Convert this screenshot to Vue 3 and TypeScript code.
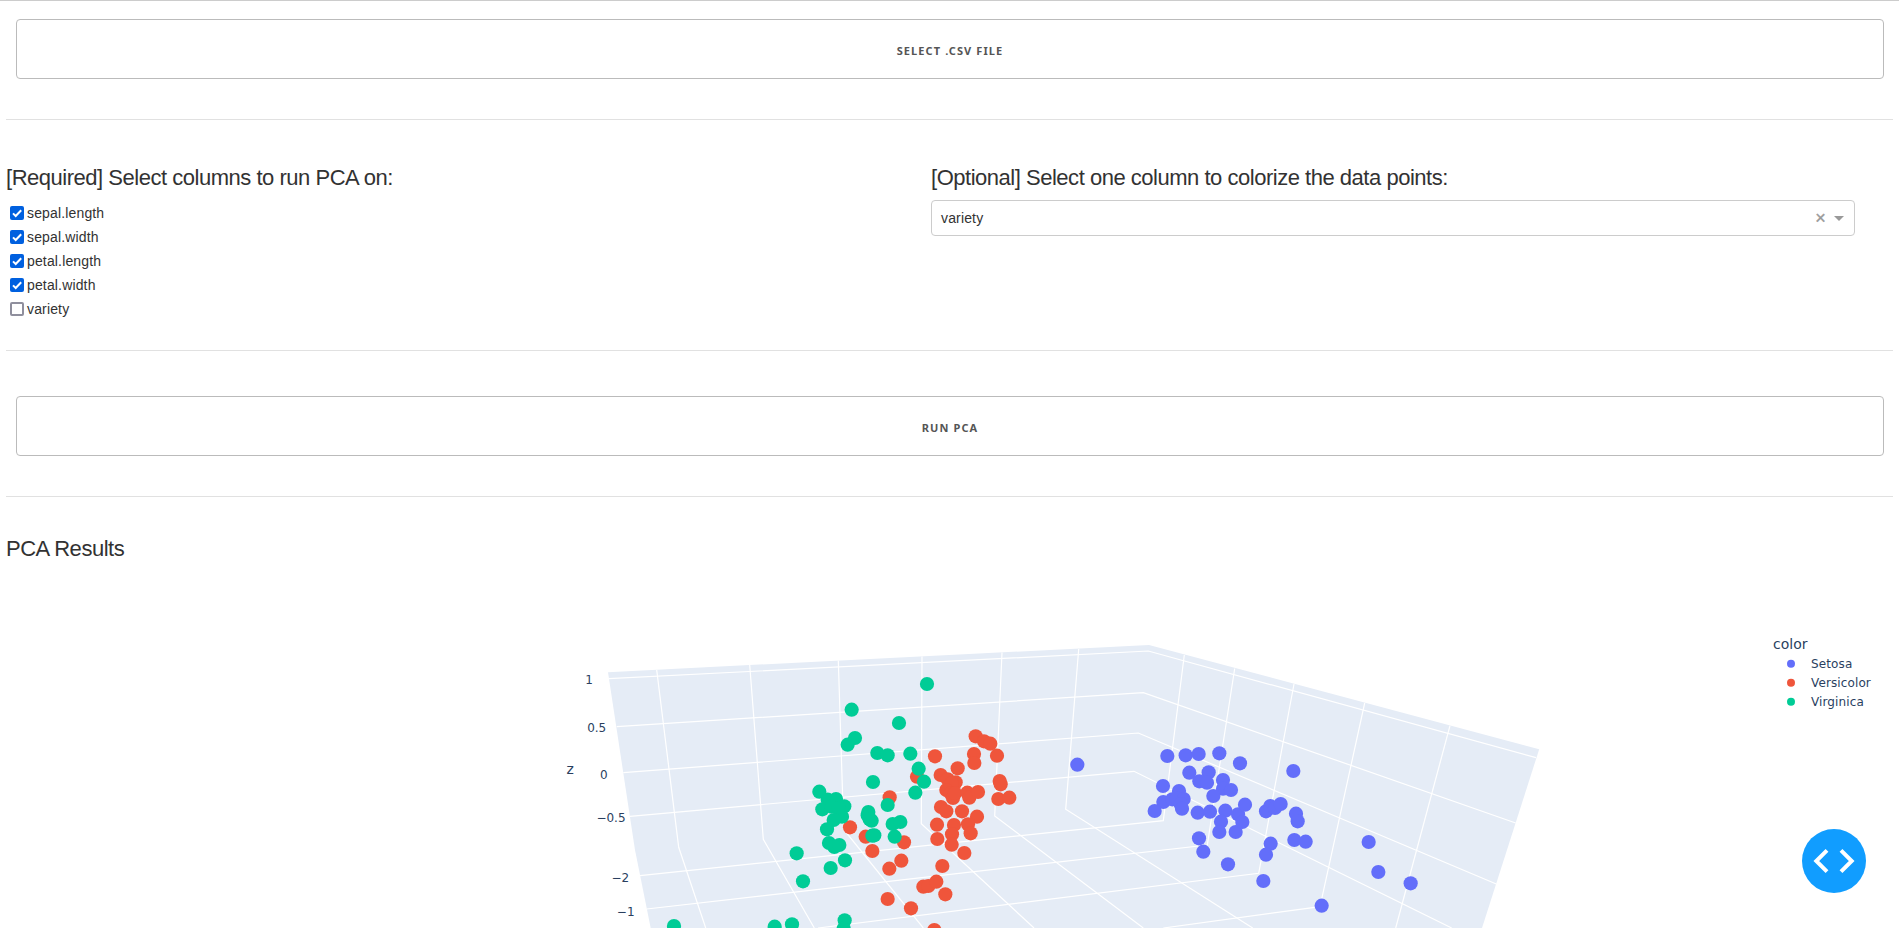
<script setup lang="ts">
import { ref } from 'vue'

type Pair = [number, number]

interface Column {
  name: string
  checked: boolean
}

interface Series {
  name: string
  color: string
  points: Pair[]
}

interface Label {
  text: string
  x: number
  y: number
}

const columns = ref<Column[]>([
  { name: 'sepal.length', checked: true },
  { name: 'sepal.width', checked: true },
  { name: 'petal.length', checked: true },
  { name: 'petal.width', checked: true },
  { name: 'variety', checked: false },
])

// Marker positions are kept in thirds of a pixel from a per-group origin.
const place = (ox: number, oy: number, pts: Pair[]): Pair[] =>
  pts.map(([x, y]) => [ox + x / 3, oy + y / 3])

const series: Series[] = [
  {
    name: 'Setosa',
    color: '#636efa',
    points: [
      ...place(1030, 630, [
        [142, 404], [412, 378], [467, 376], [506, 372], [568, 370], [630, 400], [790, 423],
        [478, 428], [536, 427], [508, 454], [531, 458], [579, 450], [579, 476], [603, 480],
        [550, 498], [399, 468], [447, 483], [400, 516], [374, 543], [427, 508], [440, 505],
        [461, 507], [452, 522], [456, 536], [503, 548], [540, 545], [586, 542], [573, 575],
        [568, 606], [617, 606], [624, 553], [637, 576], [645, 524], [708, 544], [721, 528],
        [735, 534], [752, 522], [798, 551], [803, 574], [793, 630], [507, 625], [520, 665],
        [594, 703], [722, 641], [708, 674], [700, 753],
      ]),
      ...place(1280, 680, [[77, 485], [266, 486], [295, 576], [392, 610], [125, 677]]),
    ],
  },
  {
    name: 'Versicolor',
    color: '#ef553b',
    points: place(780, 660, [
      [587, 229], [612, 244], [631, 251], [582, 282], [583, 309], [651, 287], [465, 289],
      [533, 325], [482, 345], [503, 358], [527, 367], [515, 370], [499, 390], [512, 400],
      [519, 414], [525, 400], [562, 398], [568, 413], [594, 396], [659, 363], [662, 373],
      [655, 417], [688, 413], [483, 441], [499, 454], [546, 454], [591, 470], [471, 494],
      [472, 537], [522, 495], [564, 493], [572, 520], [516, 523], [515, 554], [553, 579],
      [487, 618], [430, 680], [445, 678], [469, 665], [496, 703], [323, 717], [393, 745],
      [328, 626], [364, 602], [277, 573], [210, 502], [257, 530], [372, 547], [411, 350],
      [329, 412], [463, 810],
    ]),
  },
  {
    name: 'Virginica',
    color: '#00cc96',
    points: place(780, 660, [
      [441, 72], [215, 149], [357, 189], [225, 234], [203, 254], [292, 279], [323, 286],
      [391, 281], [416, 326], [432, 365], [406, 398], [279, 366], [118, 395], [323, 435],
      [143, 419], [168, 417], [127, 448], [193, 439], [155, 440], [176, 445], [186, 470],
      [161, 480], [141, 508], [265, 456], [263, 466], [275, 482], [269, 478], [338, 492],
      [361, 486], [344, 530], [277, 527], [283, 526], [147, 549], [163, 561], [178, 555],
      [195, 601], [152, 624], [50, 580], [69, 664], [194, 781], [191, 806], [36, 793],
      [-16, 800], [-318, 798],
    ]),
  },
]

const gridLines: string[] = [
  '608.7,678.7 1148.3,651 1536,757.7',
  '616.7,726.7 1143.3,692.7 1515.7,823',
  '623.3,772.7 1138.3,733 1496.3,884',
  '630,816.3 1134,771.3 1451.7,928',
  '656.7,670 678.7,847.3 705.7,928',
  '749.7,665 763.3,839.3 814.3,928',
  '838.3,660.5 843.7,829.5 923.3,928',
  '922,656.5 921.3,823.7 1034,928',
  '1002,652.5 994.7,816 1143.3,928',
  '1078.7,649 1065.7,809.3 1252.7,928',
  '1184.3,655 1163.3,820.7 640,875.7',
  '1234.7,668.5 1207.3,845 646.7,909',
  '1294,684 1258.7,873.3 818,928',
  '1364.7,703 1320,906.6 1163.3,928',
  '1450,725.7 1395.7,928',
]

const ticks: Label[] = [
  { text: '1', x: 589, y: 684 },
  { text: '0.5', x: 596.7, y: 732.4 },
  { text: '0', x: 603.8, y: 779 },
  { text: '−0.5', x: 611, y: 822.2 },
  { text: '−2', x: 620.3, y: 882.2 },
  { text: '−1', x: 625.7, y: 916.2 },
]
</script>

<template>
  <div class="page">
    <section class="action">
      <button class="btn" type="button">Select .csv file</button>
    </section>
    <hr class="rule" />
    <section class="options">
      <div class="col">
        <h5 class="title">[Required] Select columns to run PCA on:</h5>
        <div class="checks">
          <label v-for="c in columns" :key="c.name" class="check">
            <input v-model="c.checked" class="native" type="checkbox" />
            <span class="box" :class="{ on: c.checked }">
              <svg v-if="c.checked" viewBox="0 0 14 14" width="14" height="14">
                <path d="M3 7.4 L5.7 10 L11.2 4.2" fill="none" stroke="#fff" stroke-width="2" />
              </svg>
            </span>
            <span>{{ c.name }}</span>
          </label>
        </div>
      </div>
      <div class="col">
        <h5 class="title">[Optional] Select one column to colorize the data points:</h5>
        <div class="select">
          <span class="value">variety</span>
          <span class="clear">×</span>
          <span class="arrow"></span>
        </div>
      </div>
    </section>
    <hr class="rule" />
    <section class="action run">
      <button class="btn" type="button">Run PCA</button>
    </section>
    <hr class="rule" />
    <h5 class="title results">PCA Results</h5>
    <svg class="plot" viewBox="0 600 1899 328" width="1899" height="328">
      <polygon points="608,672.2 1149,645 1539.2,749.2 1482,928 650.7,928 635,850" fill="#e5ecf6" />
      <polyline v-for="g in gridLines" :key="g" class="grid" :points="g" />
      <g v-for="s in series" :key="s.name" :fill="s.color">
        <circle v-for="(p, i) in s.points" :key="i" :cx="p[0]" :cy="p[1]" r="7.1" />
      </g>
      <text v-for="t in ticks" :key="t.text" class="tick" :x="t.x" :y="t.y">{{ t.text }}</text>
      <text class="axis" x="570.3" y="774">z</text>
      <text class="legend-title" x="1773" y="649">color</text>
      <g v-for="(s, i) in series" :key="s.name">
        <circle cx="1791" :cy="663.7 + i * 19" r="4" :fill="s.color" />
        <text class="legend" x="1811" :y="668 + i * 19">{{ s.name }}</text>
      </g>
    </svg>
    <button class="debug" type="button" aria-label="Debug menu">
      <svg viewBox="0 0 64 64" width="64" height="64">
        <path d="M25 21.3 L14.3 32 L25 42.7 M39 21.3 L49.7 32 L39 42.7" fill="none" stroke="#fff" stroke-width="4" />
      </svg>
    </button>
  </div>
</template>

<style>
body {
  margin: 0;
  background: #fff;
  overflow: hidden;
}
</style>

<style scoped>
.page {
  position: relative;
  box-sizing: border-box;
  width: 100%;
  height: 928px;
  overflow: hidden;
  border-top: 1px solid #ccc;
  font-family: "Liberation Sans", Arial, sans-serif;
  font-size: 15px;
  color: #323232;
}

.action {
  padding: 18px 15px 0 16px;
}

.run {
  padding-top: 45px;
}

.btn {
  display: block;
  box-sizing: border-box;
  width: 100%;
  height: 60px;
  padding: 2px 0 0;
  border: 1px solid #bbb;
  border-radius: 4px;
  background: transparent;
  color: #555;
  font-family: "Noto Sans", "DejaVu Sans", sans-serif;
  font-size: 11px;
  font-weight: 700;
  letter-spacing: 1.1px;
  text-transform: uppercase;
}

.rule {
  height: 1px;
  margin: 40px 6px 0;
  border: 0;
  background: #e1e1e1;
}

.title {
  margin: 0;
  font-size: 22px;
  font-weight: 400;
  line-height: 32px;
  letter-spacing: -0.48px;
  white-space: nowrap;
}

.options {
  display: flex;
  box-sizing: border-box;
  height: 230px;
  padding: 42px 43px 0 6px;
}

.options + .rule {
  margin-top: 0;
}

.col {
  flex: 1 1 0;
  min-width: 0;
}

.checks {
  padding-top: 7px;
}

.check {
  display: flex;
  align-items: center;
  height: 24px;
  padding-left: 4px;
  gap: 3px;
  font-size: 14px;
  letter-spacing: 0.15px;
}

.native {
  display: none;
}

.box {
  box-sizing: border-box;
  width: 14px;
  height: 14px;
  border: 2px solid #8f8f9d;
  border-radius: 2px;
}

.box.on {
  border: 0;
  background: #0060df;
}

.box svg {
  display: block;
}

.select {
  display: flex;
  align-items: center;
  box-sizing: border-box;
  height: 36px;
  margin: 6px 1px 0 0;
  padding: 0 10px 0 9px;
  border: 1px solid #ccc;
  border-radius: 4px;
  font-size: 14px;
  letter-spacing: 0.15px;
}

.value {
  flex: 1;
}

.clear {
  margin-right: 8px;
  color: #999;
  font-size: 18px;
  -webkit-text-stroke: 0.4px #999;
}

.arrow {
  margin-top: 1px;
  border: 5px solid transparent;
  border-top-color: #999;
  border-bottom-width: 0;
}

.results {
  margin: 36px 6px 0;
}

.plot {
  display: block;
  margin-top: 35px;
}

.grid {
  fill: none;
  stroke: #fff;
  stroke-width: 1.2;
}

.tick,
.axis,
.legend,
.legend-title {
  fill: #2a3f5f;
  font-family: "DejaVu Sans", Verdana, sans-serif;
  font-size: 12px;
}

.tick,
.axis {
  text-anchor: middle;
}

.legend {
  letter-spacing: 0.12px;
}

.axis,
.legend-title {
  font-size: 14px;
}

.debug {
  position: absolute;
  left: 1802px;
  top: 828px;
  width: 64px;
  height: 64px;
  padding: 0;
  border: 0;
  border-radius: 50%;
  background: #119dff;
}

.debug svg {
  display: block;
}
</style>
